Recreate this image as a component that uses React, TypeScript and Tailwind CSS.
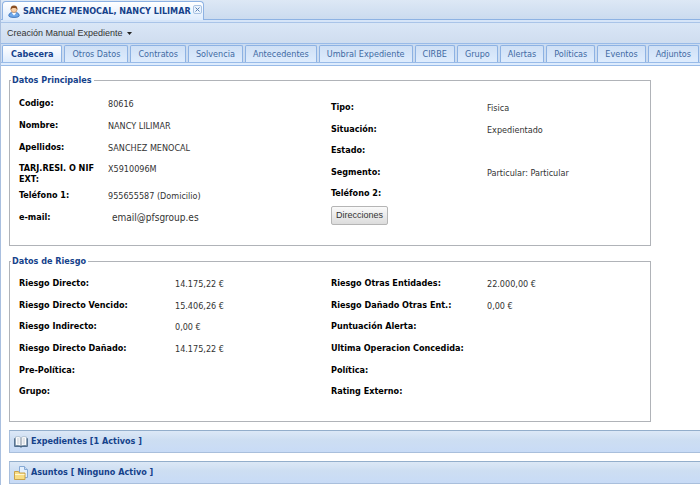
import React from "react";

type Field = { label: string; value?: string };

const tabs = [
  "Cabecera", "Otros Datos", "Contratos", "Solvencia", "Antecedentes", "Umbral Expediente",
  "CIRBE", "Grupo", "Alertas", "Políticas", "Eventos", "Adjuntos",
];

const mainLeft: Field[] = [
  { label: "Codigo:", value: "80616" },
  { label: "Nombre:", value: "NANCY LILIMAR" },
  { label: "Apellidos:", value: "SANCHEZ MENOCAL" },
  { label: "TARJ.RESI. O NIF EXT:", value: "X5910096M" },
  { label: "Teléfono 1:", value: "955655587 (Domicilio)" },
  { label: "e-mail:", value: "email@pfsgroup.es" },
];

const mainRight: Field[] = [
  { label: "Tipo:", value: "Fisica" },
  { label: "Situación:", value: "Expedientado" },
  { label: "Estado:" },
  { label: "Segmento:", value: "Particular: Particular" },
  { label: "Teléfono 2:" },
];

const riskLeft: Field[] = [
  { label: "Riesgo Directo:", value: "14.175,22 €" },
  { label: "Riesgo Directo Vencido:", value: "15.406,26 €" },
  { label: "Riesgo Indirecto:", value: "0,00 €" },
  { label: "Riesgo Directo Dañado:", value: "14.175,22 €" },
  { label: "Pre-Política:" },
  { label: "Grupo:" },
];

const riskRight: Field[] = [
  { label: "Riesgo Otras Entidades:", value: "22.000,00 €" },
  { label: "Riesgo Dañado Otras Ent.:", value: "0,00 €" },
  { label: "Puntuación Alerta:" },
  { label: "Ultima Operacion Concedida:" },
  { label: "Política:" },
  { label: "Rating Externo:" },
];

function UserIcon() {
  return (
    <svg width="12" height="13" viewBox="0 0 12 13" aria-hidden="true">
      <path d="M.8 10.500C.8 8.300 3 7.300 6 7.300s5.200 1 5.200 3.200c0 1.400-2 1.900-5.200 1.900S.8 11.900.8 10.500z" fill="#6fa8ea" stroke="#3a70b8" strokeWidth=".9" />
      <path d="M3.500 7.500L6 10.500l2.500-3z" fill="#fff" />
      <circle cx="6" cy="4.500" r="3" fill="#f8d0a8" stroke="#b87848" strokeWidth=".6" />
      <path d="M2.700 5C2.200 1.800 3.700.4 6 .4S9.800 1.800 9.300 5C8.800 3.400 7.800 3 6 3s-2.800.4-3.300 2z" fill="#8a4f22" />
    </svg>
  );
}

function BookIcon() {
  return (
    <svg width="14" height="12" viewBox="0 0 14 12" aria-hidden="true">
      <path d="M.3 2.200h13.400v8.600H8.200L7 11.700l-1.200-.9H.3z" fill="#27486b" />
      <path d="M1.500 1C4 .3 5.800.6 7 1.800 8.200.6 10 .3 12.500 1v8.500C10 9 8.200 9.200 7 10.200 5.800 9.200 4 9 1.500 9.500z" fill="#fff" stroke="#8fa2b4" strokeWidth=".6" />
      <path d="M7 2v8" stroke="#5d7288" strokeWidth=".9" />
      <path d="M3 3h2.500M3 5h2.500M3 7h2.500M8.500 3H11M8.500 5H11M8.500 7H11" stroke="#a3afbb" strokeWidth=".7" />
    </svg>
  );
}

function FolderIcon() {
  return (
    <svg width="14" height="14" viewBox="0 0 14 14" aria-hidden="true">
      <path d="M5.500.5h5l3 3v8h-8z" fill="#e3effc" stroke="#86a9d4" />
      <path d="M10.500.5v3h3" fill="#c3daf4" stroke="#86a9d4" />
      <path d="M.5 5.500h4l1 1.500H11v6.500H.5z" fill="#f8dd84" stroke="#c9a24a" />
      <path d="M1 8.500h9.500" stroke="#fff7d2" />
    </svg>
  );
}

function FieldList({ fields, labelClass }: { fields: Field[]; labelClass: string }) {
  return (
    <>
      {fields.map((f) => (
        <div key={f.label} className="flex items-start">
          <dt className={`${labelClass} shrink-0 font-bold text-black`}>{f.label}</dt>
          <dd className={f.label === "e-mail:" ? "pl-1 text-[10px] text-[#333]" : "pt-px text-[#333]"}>{f.value}</dd>
        </div>
      ))}
    </>
  );
}

function Section({ title, children }: { title: string; children: React.ReactNode }) {
  return (
    <fieldset className="w-full max-w-[642px] border border-[#b0b3b8] pl-[9px]">
      <legend className="-ml-2 pr-0.5 pl-px leading-[14px] font-bold text-[#15428b]">{title}</legend>
      {children}
    </fieldset>
  );
}

function CollapsedPanel({ icon, title }: { icon: React.ReactNode; title: string }) {
  return (
    <button
      type="button"
      className="flex h-[23px] items-center gap-[3px] border border-r-0 border-[#a9bfdc] border-t-[#93aecb] bg-linear-to-b from-[#dce8f6] from-0% via-[#cddef2] via-42% to-[#c8dbf6] pl-1 text-left font-bold text-[#15428b]"
    >
      {icon}
      {title}
    </button>
  );
}

export default function App() {
  return (
    <div className="min-h-screen overflow-x-hidden border-l border-[#a9bfdf] bg-white font-['DejaVu_Sans_Condensed','Noto_Sans',sans-serif] text-[9px] leading-[11px]">
      <header className="border-b border-[#8db2e3] bg-linear-to-b from-[#dde8f5] to-[#cbdbef] pt-px pl-px">
        <div className="-mb-px flex h-[19px] w-[202px] items-center justify-between rounded-t border border-b-0 border-[#8db2e3] bg-linear-to-b from-white to-[#deecfd] pl-[5px] text-[#15428b]">
          <span className="flex items-center gap-[3px] font-bold whitespace-nowrap">
            <UserIcon />
            SANCHEZ MENOCAL, NANCY LILIMAR
          </span>
          <button type="button" aria-label="Cerrar" className="mr-px mb-1 flex size-[9px] items-center justify-center rounded-xs border border-[#a9c3e3] bg-[#eaf3fd]">
            <svg width="5" height="5" viewBox="0 0 5 5" aria-hidden="true">
              <path d="M.5.5l4 4M4.500.5l-4 4" stroke="#5a7fb0" />
            </svg>
          </button>
        </div>
      </header>
      <div className="h-[3px] border-b border-[#a9c4e8] bg-[#d6e5f8]" />
      <div className="flex h-5 items-center bg-linear-to-b from-[#d9e6f6] to-[#cfddef] pl-1.5">
        <button type="button" className="flex items-center gap-1 font-['Liberation_Sans',sans-serif] text-[9px] whitespace-nowrap text-[#333]">
          Creación Manual Expediente
          <svg width="5" height="3" viewBox="0 0 5 3" aria-hidden="true">
            <path d="M0 0h5L2.500 3z" fill="#222" />
          </svg>
        </button>
      </div>
      <nav role="tablist" className="flex h-[19px] items-end gap-0.5 overflow-hidden border-t border-[#99bbe8] bg-[#cbdcf1] pt-px pl-px">
        {tabs.map((tab, i) => (
          <button
            key={tab}
            type="button"
            role="tab"
            aria-selected={i === 0}
            className={
              i === 0
                ? "h-full shrink-0 rounded-t-xs border border-b-0 border-[#8db2e3] bg-linear-to-b from-white to-[#deecfd] px-2 font-bold text-[#15428b]"
                : "h-full shrink-0 rounded-t-xs border border-b-0 border-[#8db2e3] bg-linear-to-b from-[#cfe0f5] to-[#deecfd] px-[7px] whitespace-nowrap text-[#416aa3]"
            }
          >
            {tab}
          </button>
        ))}
        <span className="h-full w-5 shrink-0 rounded-t-xs border border-b-0 border-[#8db2e3] bg-[#deecfd]" />
      </nav>
      <div className="h-[4px] border-y border-[#99bbe8] bg-[#deecfd]" />
      <main className="flex flex-col gap-2 pt-[7px] pl-2">
        <Section title="Datos Principales">
          <div className="flex h-[158px] pt-[11px]">
            <dl className="grid h-[136px] w-[312px] grid-rows-[1fr_1fr_1fr_27px_1fr_1fr]">
              <FieldList fields={mainLeft} labelClass="w-[89px]" />
            </dl>
            <div className="pt-1">
              <dl className="grid h-[108px] grid-rows-5">
                <FieldList fields={mainRight} labelClass="w-[156px]" />
              </dl>
              <button type="button" className="-mt-1 h-[19px] rounded-xs border border-[#b5b5b5] bg-linear-to-b from-[#fafafa] to-[#dcdcdc] px-1 font-['Liberation_Sans',sans-serif] text-[9px] text-[#333]">
                Direcciones
              </button>
            </div>
          </div>
        </Section>
        <Section title="Datos de Riesgo">
          <div className="flex h-[153px] pt-[10px]">
            <dl className="grid h-[130px] w-[312px] grid-rows-6">
              <FieldList fields={riskLeft} labelClass="w-[156px]" />
            </dl>
            <dl className="grid h-[130px] grid-rows-6">
              <FieldList fields={riskRight} labelClass="w-[156px]" />
            </dl>
          </div>
        </Section>
        <CollapsedPanel icon={<BookIcon />} title="Expedientes [1 Activos ]" />
        <CollapsedPanel icon={<FolderIcon />} title="Asuntos [ Ninguno Activo ]" />
      </main>
    </div>
  );
}
